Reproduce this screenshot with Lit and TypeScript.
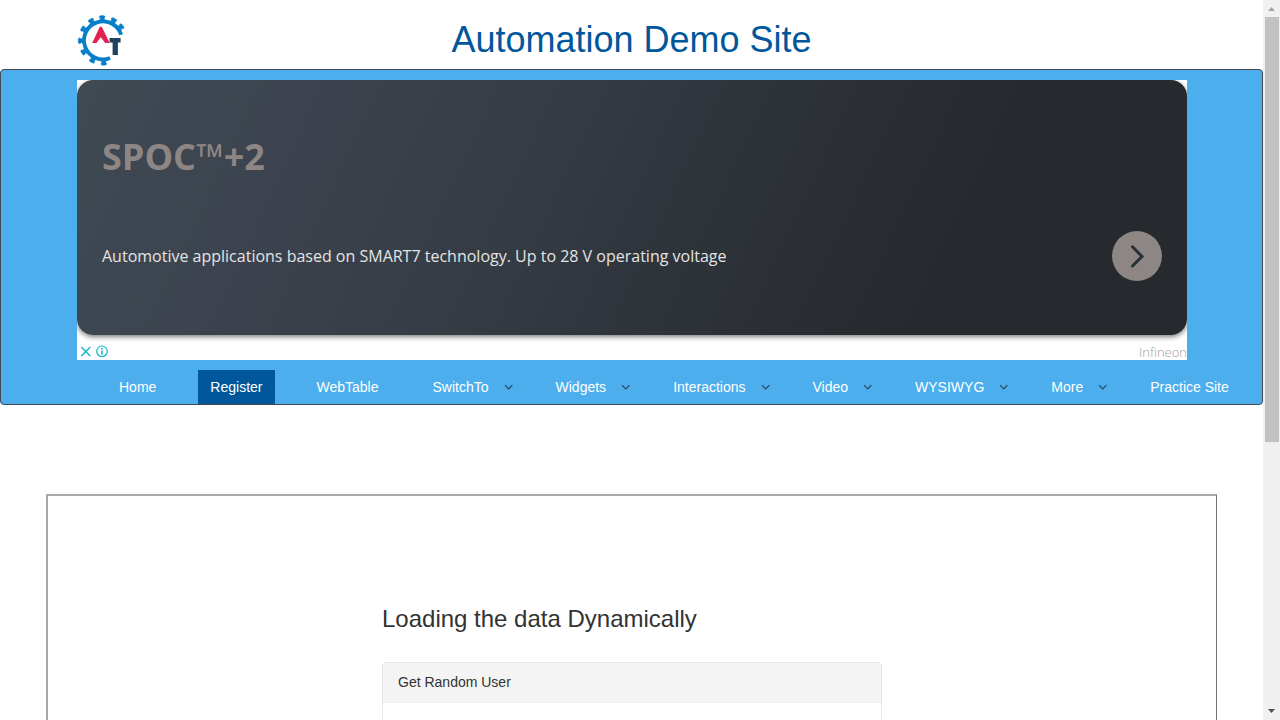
import { LitElement, html, css, svg } from "lit";
import { customElement } from "lit/decorators.js";

interface MenuItem {
  label: string;
  menu?: boolean;
  active?: boolean;
}

const MENU: MenuItem[] = [
  { label: "Home" },
  { label: "Register", active: true },
  { label: "WebTable" },
  { label: "SwitchTo", menu: true },
  { label: "Widgets", menu: true },
  { label: "Interactions", menu: true },
  { label: "Video", menu: true },
  { label: "WYSIWYG", menu: true },
  { label: "More", menu: true },
  { label: "Practice Site" },
];

@customElement("site-logo")
class SiteLogo extends LitElement {
  static styles = css`
    :host { display: block; width: 50px; height: 52px; }
    .mark { display: block; overflow: visible; }
  `;
  render() {
    const teeth = [88, 118, 149, 179, 210, 239, 268, 298, 323];
    return html`<svg class="mark" width="50" height="52" viewBox="0 0 50 52" role="img" aria-label="Automation Testing">
      <g transform="translate(26 26.4)">
        <path d="M18.2 -5.6 A19 19 0 1 0 7.1 17.6" fill="none" stroke="#0a7fc9" stroke-width="3.8"/>
        ${teeth.map((a) => svg`<path d="M19 -3.8 L21.6 -1.8 L23.6 -2.9 L24.7 -2 V2 L23.6 2.9 L21.6 1.8 L19 3.8 Z" fill="#0a7fc9" stroke="#0a7fc9" stroke-width=".6" transform="rotate(${a})"/>`)}
      </g>
      <path d="M15.2 29 L22.8 12.7 H24.8 L32.6 29 H28.2 L23.8 23.2 L19.4 29 Z" fill="#e0234e"/>
      <path d="M32.5 24 H43.6 V28.6 H40.9 V41 H35.6 V28.6 H32.5 Z" fill="#1f4260"/>
    </svg>`;
  }
}

@customElement("ad-banner")
class AdBanner extends LitElement {
  static styles = css`
    :host { display: block; background: #fff; font-family: "Open Sans", "Noto Sans", sans-serif; }
    .card {
      box-sizing: border-box;
      height: 255px;
      padding: 51px 25px 54px;
      display: flex;
      flex-direction: column;
      justify-content: space-between;
      border-radius: 16px;
      background: linear-gradient(115deg, #3f4a53 0%, #3c434e 20%, #343b43 42%, #2d3138 60%, #26292d 78%);
      box-shadow: 0 2px 5px rgba(0, 0, 0, 0.5);
      clip-path: inset(0 0 -12px 0);
    }
    .title { margin: 0; font-size: 36px; line-height: 52px; font-weight: 700; color: #8d8684; }
    .tm { font-weight: 600; }
    .row { display: flex; align-items: center; justify-content: space-between; }
    .text { margin: 0; font-size: 16px; line-height: 22px; color: #e4e4e4; }
    .go {
      width: 50px; height: 50px; padding: 0; border: 0; border-radius: 50%;
      background: #8d8684; display: grid; place-items: center;
    }
    .foot { height: 25px; display: flex; align-items: flex-end; justify-content: space-between; }
    .marks { display: flex; gap: 4px; padding: 0 3px 3px; }
    .mark { width: 12px; height: 12px; padding: 0; border: 0; background: none; }
    .mark svg, .go svg { display: block; }
    .brand { font-size: 13px; line-height: 16px; font-weight: 300; color: #a0a0a0; text-decoration: none; }
  `;
  render() {
    return html`<div class="card">
        <h2 class="title">SPOC<span class="tm">™</span>+2</h2>
        <div class="row">
          <p class="text">Automotive applications based on SMART7 technology. Up to 28 V operating voltage</p>
          <button class="go" aria-label="Open">
            <svg width="24" height="24" viewBox="0 0 24 24"><path d="M7.5 2.8 L17 12.4 L7.5 22" fill="none" stroke="#26323a" stroke-width="3" stroke-linecap="round"/></svg>
          </button>
        </div>
      </div>
      <div class="foot">
        <div class="marks">
          <button class="mark" aria-label="Close"><svg width="12" height="12"><path d="M1.3 2 L10.3 11 M10.3 2 L1.3 11" stroke="#16b3cf" stroke-width="1.4"/></svg></button>
          <button class="mark" aria-label="Ad info"><svg width="12" height="12"><circle cx="6" cy="6.3" r="5.3" fill="none" stroke="#16b3cf" stroke-width="1.2"/><path d="M6 5.4 V9.8 M6 2.9 V4.4" stroke="#16b3cf" stroke-width="1.6"/></svg></button>
        </div>
        <a class="brand" href="#">Infineon</a>
      </div>`;
  }
}

@customElement("app-root")
class AppRoot extends LitElement {
  static styles = css`
    :host {
      display: grid;
      grid-template-columns: minmax(0, 1fr) 17px;
      height: 100vh;
      overflow: hidden;
      background: #fff;
      font: 14px/20px "Liberation Sans", Arial, sans-serif;
      color: #333;
    }
    .page { min-width: 0; overflow: hidden; }
    .head {
      display: grid;
      grid-template-columns: 50px 1fr 50px;
      align-items: center;
      height: 69px;
      padding: 0 77px;
      box-sizing: border-box;
    }
    .site { margin: 0; padding-top: 11px; text-align: center; font-size: 36px; line-height: 40px; font-weight: 400; color: #00579b; }
    .logo { padding-top: 11px; }
    .bar { border: 1px solid #414a52; border-radius: 4px; background: #4caeec; padding-top: 10px; }
    .ad { margin: 0 75px 10px 76px; }
    .menu { list-style: none; display: flex; gap: 30px; margin: 0; padding: 0 22px 0 106px; }
    .item { display: flex; align-items: center; white-space: nowrap; }
    .link { padding: 7px 12px; color: #fff; text-decoration: none; }
    .active { background: #00579b; }
    .chev { width: 13px; height: 10px; }
    .frame {
      box-sizing: border-box;
      margin: 89px 46px 0;
      height: 400px;
      border: 2px solid #a9a9a9;
      border-right: 1px solid #767676;
      padding-top: 106px;
    }
    .content { width: 500px; margin: 0 auto; }
    .heading { margin: 0 0 26px; font-size: 24px; line-height: 34px; font-weight: 400; }
    .panel { border: 1px solid #e7e7e7; border-radius: 4px; height: 300px; }
    .panel-head { margin: 0; padding: 10px 15px; line-height: 19px; font-size: 14px; font-weight: 400; background: #f4f4f4; border-bottom: 1px solid #ececec; }
    .scroll { background: #f0f0f0; display: flex; flex-direction: column; }
    .arrow { flex: none; width: 17px; height: 17px; }
    .track { flex: 1; padding: 0 1px 0 2px; }
    .thumb { height: 62%; background: #c1c1c1; }
  `;

  render() {
    return html`<div class="page">
        <header class="head">
          <site-logo class="logo"></site-logo>
          <h1 class="site">Automation Demo Site</h1>
        </header>
        <nav class="bar">
          <ad-banner class="ad"></ad-banner>
          <ul class="menu">
            ${MENU.map(
              (m) => html`<li class="item">
                <a class="link ${m.active ? "active" : ""}" href="#">${m.label}</a>${m.menu
                  ? html`<svg class="chev" viewBox="0 0 13 10"><path d="M4 3.2 L7.7 7 L11.4 3.2" fill="none" stroke="#25485f" stroke-width="1.2"/></svg>`
                  : ""}
              </li>`
            )}
          </ul>
        </nav>
        <main class="frame">
          <section class="content">
            <h2 class="heading">Loading the data Dynamically</h2>
            <div class="panel"><h3 class="panel-head">Get Random User</h3></div>
          </section>
        </main>
      </div>
      <div class="scroll" aria-hidden="true">
        <svg class="arrow" viewBox="0 0 17 17"><path d="M5 11 L8.5 7 L12 11 Z" fill="#a3a3a3"/></svg>
        <div class="track"><div class="thumb"></div></div>
        <svg class="arrow" viewBox="0 0 17 17"><path d="M5 6 L8.5 10 L12 6 Z" fill="#505050"/></svg>
      </div>`;
  }
}
